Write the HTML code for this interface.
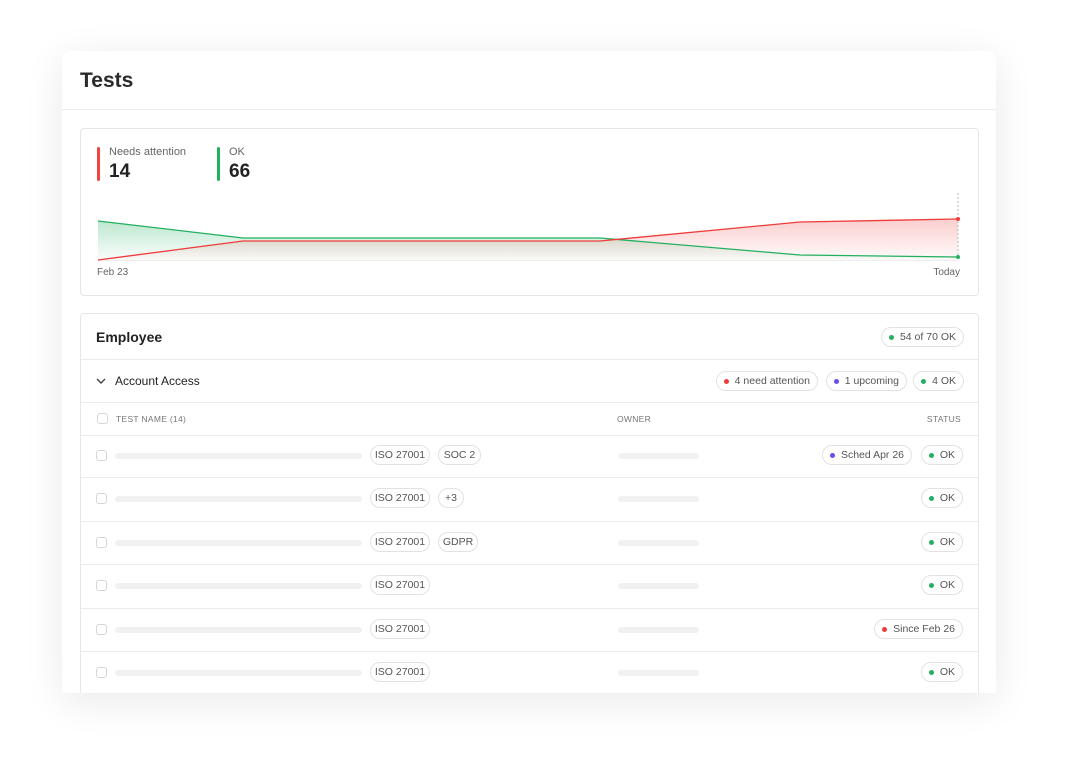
<!DOCTYPE html>
<html><head><meta charset="utf-8"><style>
*{box-sizing:border-box;margin:0;padding:0}
body{width:1080px;height:769px;background:#fff;font-family:"Liberation Sans",sans-serif;position:relative;overflow:hidden;color:#222}
.abs{position:absolute}
.main{left:62px;top:51px;width:934px;height:642px;background:#fff;border-radius:8px 8px 0 0;box-shadow:0 8px 40px rgba(0,0,0,0.09)}
.box{border:1px solid #e6e6e6;border-radius:4px;background:#fff}
.pill{position:absolute;height:20px;border:1px solid #e2e2e2;border-radius:10px;font-size:10.5px;color:#555;padding:0 7px;white-space:nowrap;background:#fff;display:flex;align-items:center;justify-content:center}
.dot{display:inline-block;width:5px;height:5px;border-radius:3px;margin-right:6px}
.g{background:#22b060}.r{background:#ee3b3b}.p{background:#6a4cf0}
.cb{position:absolute;left:16px;width:11px;height:11px;border:1px solid #d6d6d6;border-radius:3px}
.hl{position:absolute;left:0;right:0;height:1px;background:#ebebeb}
.bar{position:absolute;height:6px;border-radius:3px;background:#f1f1f1}
#clip{position:absolute;left:0;top:0;width:1080px;height:693px;overflow:hidden}
</style></head><body>
<div class="abs main"></div>
<div id="clip">
<div class="abs" style="left:80px;top:69px;font-size:21px;font-weight:bold;color:#2a2a2a">Tests</div>
<div class="abs" style="left:62px;width:934px;top:109px;height:1px;background:#ececec"></div>
<div class="abs box" style="left:80px;top:128px;width:899px;height:168px"></div>
<div class="abs" style="left:97px;top:147px;width:3px;height:34px;background:#ee4444;border-radius:2px"></div>
<div class="abs" style="left:109px;top:146px;font-size:11px;color:#666">Needs attention</div>
<div class="abs" style="left:109px;top:161px;font-size:19px;font-weight:bold;color:#222">14</div>
<div class="abs" style="left:217px;top:147px;width:3px;height:34px;background:#22b060;border-radius:2px"></div>
<div class="abs" style="left:229px;top:146px;font-size:11px;color:#666">OK</div>
<div class="abs" style="left:229px;top:161px;font-size:19px;font-weight:bold;color:#222">66</div>
<svg class="abs" style="left:0;top:0" width="1080" height="300">
<defs>
<linearGradient id="gg" x1="0" y1="0" x2="0" y2="1"><stop offset="0" stop-color="#22b060" stop-opacity=".3"/><stop offset="1" stop-color="#22b060" stop-opacity=".02"/></linearGradient>
<linearGradient id="rg" x1="0" y1="0" x2="0" y2="1"><stop offset="0" stop-color="#ee3b3b" stop-opacity=".25"/><stop offset="1" stop-color="#ee3b3b" stop-opacity=".02"/></linearGradient>
</defs>
<line x1="98" y1="260.5" x2="958" y2="260.5" stroke="#eee"/>
<path d="M98 221 L243 238 L600 238 L800 255 L958 257 L958 260 L98 260Z" fill="url(#gg)"/>
<path d="M98 260 L243 241 L600 241 L800 222 L958 219 L958 260Z" fill="url(#rg)"/>
<path d="M98 221 L243 238 L600 238 L800 255 L958 257" fill="none" stroke="#22b060" stroke-width="1.3"/>
<path d="M98 260 L243 241 L600 241 L800 222 L958 219" fill="none" stroke="#ee3b3b" stroke-width="1.3"/>
<line x1="958" y1="193" x2="958" y2="257" stroke="#bbb" stroke-dasharray="2 2"/>
<circle cx="958" cy="219" r="2" fill="#ee3b3b"/><circle cx="958" cy="257" r="2" fill="#22b060"/>
<text x="97" y="275" font-size="10" fill="#666" font-family="Liberation Sans">Feb 23</text>
<text x="960" y="275" font-size="10" fill="#666" text-anchor="end" font-family="Liberation Sans">Today</text>
</svg>
<div class="abs box" style="left:80px;top:313px;width:899px;height:400px">
  <div class="abs" style="left:15px;top:15px;font-size:14px;font-weight:bold">Employee</div>
  <div class="pill" style="right:14px;top:13px"><span class="dot g"></span>54 of 70 OK</div>
  <div class="hl" style="top:45px"></div>
  <svg class="abs" style="left:15px;top:63px" width="10" height="8"><path d="M1 2 L5 6 L9 2" fill="none" stroke="#444" stroke-width="1.4"/></svg>
  <div class="abs" style="left:34px;top:60px;font-size:12px;color:#222">Account Access</div>
  <div class="pill" style="right:160px;top:57px"><span class="dot r"></span>4 need attention</div>
  <div class="pill" style="right:71px;top:57px"><span class="dot p"></span>1 upcoming</div>
  <div class="pill" style="right:14px;top:57px"><span class="dot g"></span>4 OK</div>
  <div class="hl" style="top:88px"></div>
  <div class="cb" style="top:99px"></div>
  <div class="abs" style="left:35px;top:100px;font-size:8.5px;color:#777;letter-spacing:.3px">TEST NAME (14)</div>
  <div class="abs" style="left:536px;top:100px;font-size:8.5px;color:#777;letter-spacing:.3px">OWNER</div>
  <div class="abs" style="right:17px;top:100px;font-size:8.5px;color:#777;letter-spacing:.3px">STATUS</div>
  <div class="hl" style="top:121px"></div>
</div>
<div id="rows"></div>
</div>
<script>
var rows=[[455,["SOC 2",43],[["p","Sched Apr 26",168],["g","OK",117]]],[498,["+3",26],[["g","OK",117]]],[542,["GDPR",40],[["g","OK",117]]],[585,null,[["g","OK",117]]],[629,null,[["r","Since Feb 26",117]]],[672,null,[["g","OK",117]]]];
var h='';rows.forEach(function(r,i){var y=r[0];
if(i>0)h+='<div class="abs" style="left:81px;width:897px;top:'+(y-21)+'px;height:1px;background:#ebebeb"></div>';
h+='<div class="cb" style="left:96px;top:'+(y-5)+'px"></div>';
h+='<div class="bar" style="left:115px;width:247px;top:'+(y-2)+'px"></div>';
h+='<div class="bar" style="left:618px;width:81px;top:'+(y-2)+'px"></div>';
h+='<div class="pill" style="left:370px;width:60px;padding:0;top:'+(y-10)+'px">ISO 27001</div>';
if(r[1])h+='<div class="pill" style="left:438px;width:'+r[1][1]+'px;padding:0;top:'+(y-10)+'px">'+r[1][0]+'</div>';
r[2].forEach(function(s){h+='<div class="pill" style="right:'+s[2]+'px;top:'+(y-10)+'px"><span class="dot '+s[0]+'"></span>'+s[1]+'</div>';});
});
document.getElementById('rows').innerHTML=h;
</script>
</body></html>
